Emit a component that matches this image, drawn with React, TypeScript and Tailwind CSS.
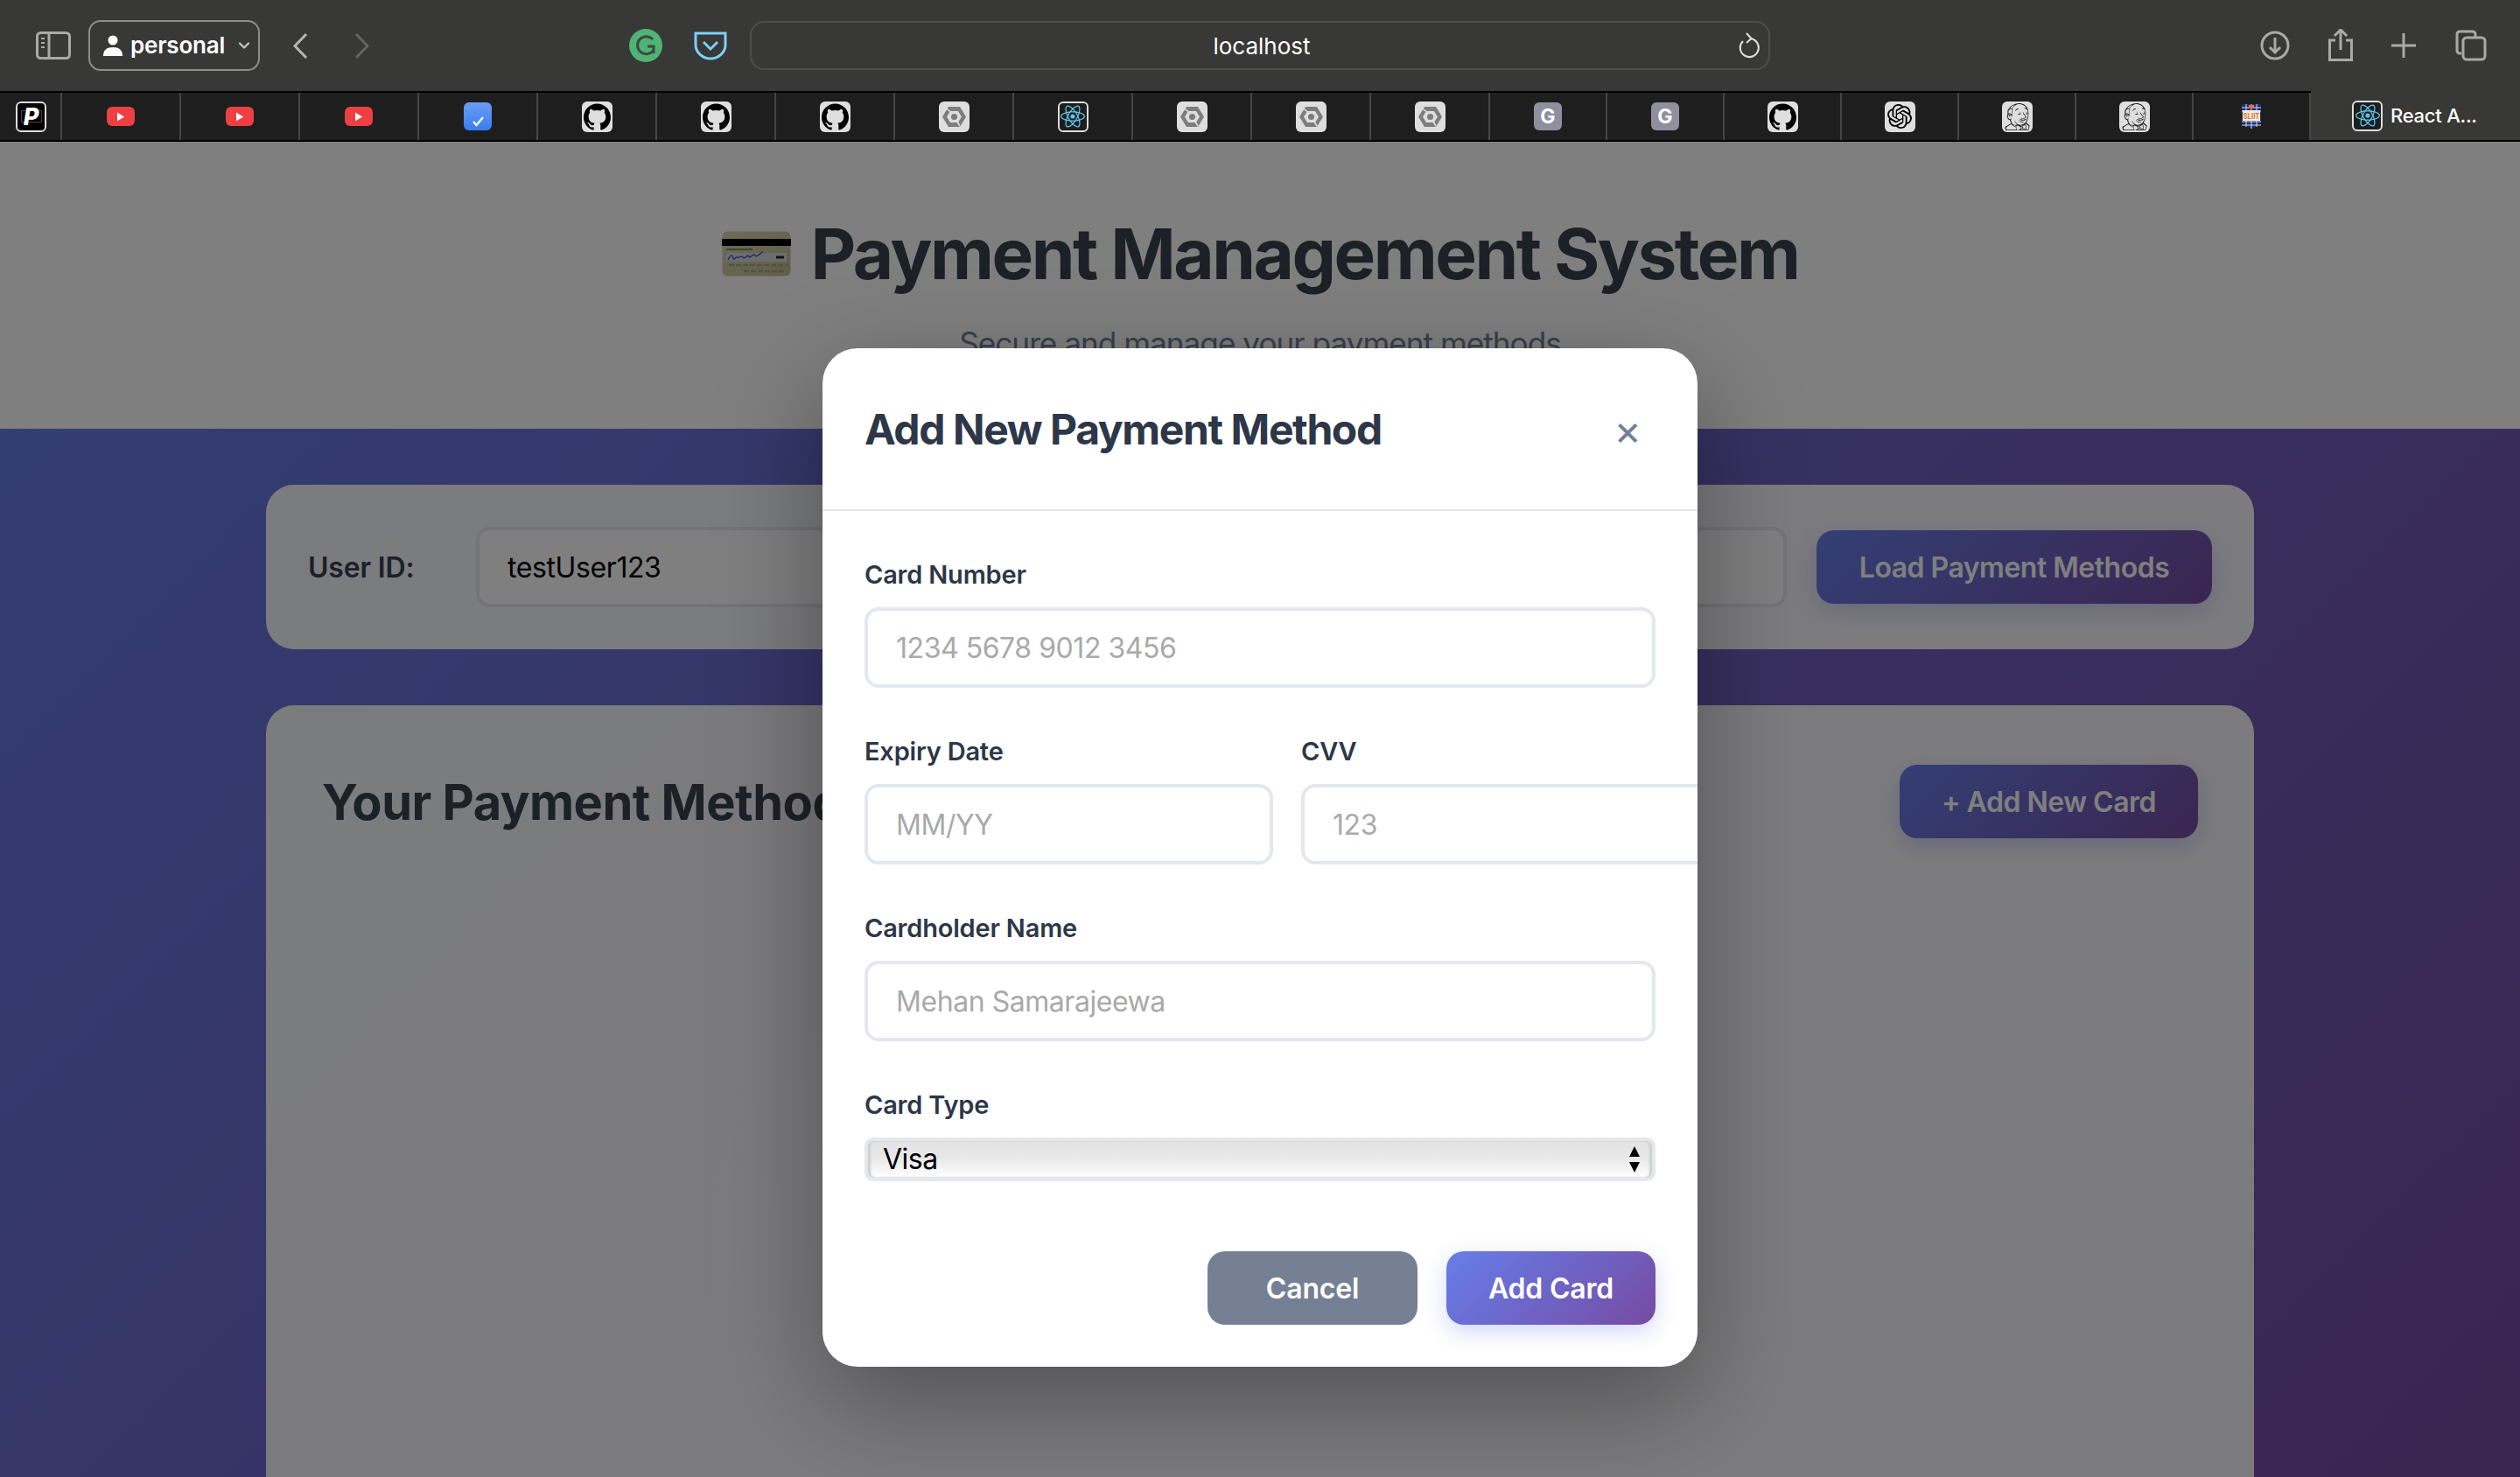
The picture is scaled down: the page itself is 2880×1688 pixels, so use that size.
import { SiGithub, SiJenkins, SiOpenai, SiReact } from "react-icons/si";
import { ChevronDown } from "lucide-react";

const tabEnds = [207, 343, 479, 615, 751, 887, 1023, 1159, 1295, 1431, 1567, 1703, 1837, 1971, 2105, 2239, 2373, 2507, 2641];

type TabKind = "yt" | "check" | "gh" | "hex" | "react" | "g" | "ai" | "jenkins" | "sliit";
const tabKinds: TabKind[] = ["yt", "yt", "yt", "check", "gh", "gh", "gh", "hex", "react", "hex", "hex", "hex", "g", "g", "gh", "ai", "jenkins", "jenkins", "sliit"];

function Tile({ children, dark }: { children: React.ReactNode; dark?: boolean }) {
  return (
    <div className={`flex h-[35px] w-[35px] items-center justify-center overflow-hidden rounded-[6px] ${dark ? "border-2 border-[#dcdcdc] bg-[#1d1d1d]" : "bg-[#dedede]"}`}>
      {children}
    </div>
  );
}

function HexIcon() {
  return (
    <svg width="29" height="27" viewBox="0 0 29 27" fill="none">
      <path d="M8 2h13l7 11.5-7 11.5H8L1 13.5z" fill="#7d7d7d" />
      <path d="M10 7h9l4 6.5-4 6.5h-9l-4-6.5z" fill="#dedede" />
      <circle cx="14.5" cy="13.5" r="3.6" fill="#7d7d7d" />
      <path d="M5 3.5l5 4M21 24l-3-5" stroke="#dedede" strokeWidth="1.6" />
    </svg>
  );
}

function TabIcon({ kind }: { kind: TabKind }) {
  if (kind === "yt") {
    return (
      <div className="flex h-[22px] w-[32px] items-center justify-center rounded-[6px] bg-[#ee3f42]">
        <svg width="10" height="11" viewBox="0 0 10 11"><path d="M1 0.5l8 5-8 5z" fill="#fff" /></svg>
      </div>
    );
  }
  if (kind === "check") {
    return (
      <div className="flex h-[32px] w-[32px] items-end justify-center rounded-[6px] bg-[linear-gradient(180deg,#6c9cf2,#387ff0)] pb-[4px]">
        <svg width="15" height="13" viewBox="0 0 15 13" fill="none"><path d="M2 7l3.5 4L13 2" stroke="#fff" strokeWidth="2.2" /></svg>
      </div>
    );
  }
  if (kind === "gh") return <Tile><SiGithub className="text-[31px] text-black" /></Tile>;
  if (kind === "hex") return <Tile><HexIcon /></Tile>;
  if (kind === "react") return <Tile dark><SiReact className="text-[28px] text-[#5fc4e8]" /></Tile>;
  if (kind === "g") {
    return <div className="flex h-[32px] w-[32px] items-center justify-center rounded-[6px] bg-[#8f8f9d] text-[23px] font-bold text-white">G</div>;
  }
  if (kind === "ai") return <Tile><SiOpenai className="text-[28px] text-black" /></Tile>;
  if (kind === "jenkins") return <Tile><SiJenkins className="text-[31px] text-[#222]" /></Tile>;
  return (
    <svg width="24" height="30" viewBox="0 0 24 30">
      <path d="M1 1h22v18c0 5-6 8-11 10C7 27 1 24 1 19z" fill="#1e2f7c" />
      <path d="M1 5h22M1 9h22M1 21h22M1 25h22M6 1v26M12 1v28M18 1v26" stroke="#d8d8e6" strokeWidth="1" />
      <rect x="2" y="8" width="20" height="12" fill="#f0ece4" />
      <text x="12" y="18" textAnchor="middle" fontSize="9" fontWeight="700" fill="#e2762b" textLength="19" lengthAdjust="spacingAndGlyphs">SLIIT</text>
      <rect x="9" y="2" width="6" height="4" fill="#e2762b" />
    </svg>
  );
}

function TabBar() {
  return (
    <div className="flex h-[58px] border-y-2 border-black bg-[#1e1e1e]">
      <div className="flex w-[71px] items-center justify-start border-r-2 border-[#454545] pl-[18px]">
        <div className="relative flex h-[35px] w-[35px] items-center justify-center rounded-[6px] border-2 border-[#dcdcdc] bg-black">
          <div className="absolute h-[14px] w-[24px] border border-[#444]" />
          <span className="relative text-[27px] font-extrabold italic leading-none text-white">P</span>
        </div>
      </div>
      {tabKinds.map((kind, i) => (
        <div key={i} className="flex items-center justify-center border-r-2 border-[#454545]" style={{ width: tabEnds[i] - (i === 0 ? 71 : tabEnds[i - 1]) }}>
          <TabIcon kind={kind} />
        </div>
      ))}
      <div className="-mt-[2px] flex flex-1 items-center bg-[#383836] pl-[47px]">
        <Tile dark><SiReact className="text-[28px] text-[#5fc4e8]" /></Tile>
        <span className="ml-[9px] text-[22px] font-medium tracking-[-0.25px] text-white">React A...</span>
      </div>
    </div>
  );
}

function Toolbar() {
  return (
    <div className="flex h-[104px] items-center bg-[#383836]">
      <svg className="ml-[41px]" width="40" height="32" viewBox="0 0 40 32" fill="none" stroke="#a9a9a7" strokeWidth="3">
        <rect x="1.5" y="1.5" width="37" height="29" rx="4" />
        <path d="M15 1.5v29" />
        <path d="M6 8h4M6 13h4M6 18h4" strokeWidth="2" />
      </svg>
      <div className="ml-[20px] flex h-[58px] w-[196px] items-center rounded-[14px] border-2 border-[#8c8c8a] pl-[15px]">
        <svg width="22" height="24" viewBox="0 0 22 24" fill="#fff">
          <circle cx="11" cy="6" r="5.5" />
          <path d="M0 24c0-7 4-10 11-10s11 3 11 10z" />
        </svg>
        <span className="ml-[9px] text-[26px] font-semibold leading-none tracking-[-0.2px] text-white">personal</span>
        <ChevronDown className="ml-[12px] text-[#c9c9c7]" size={20} strokeWidth={2.6} />
      </div>
      <svg className="ml-[36px]" width="20" height="31" viewBox="0 0 20 31" fill="none" stroke="#b5b5b3" strokeWidth="3"><path d="M17 2L4 15.5 17 29" /></svg>
      <svg className="ml-[51px]" width="20" height="31" viewBox="0 0 20 31" fill="none" stroke="#636361" strokeWidth="3"><path d="M3 2l13 13.5L3 29" /></svg>
      <div className="ml-[295px] flex h-[38px] w-[38px] items-center justify-center rounded-full bg-[#4fb374]">
        <svg width="26" height="26" viewBox="0 0 26 26" fill="none" stroke="#3c4a42" strokeWidth="3"><path d="M21 6a10 10 0 1 0 1 12M15 14h7v8" /></svg>
      </div>
      <svg className="ml-[36px]" width="38" height="33" viewBox="0 0 38 33" fill="none" stroke="#7cd0fb" strokeWidth="3">
        <path d="M2 2h34v13c0 9-8 16-17 16S2 24 2 15z" />
        <path d="M11 12l8 8 8-8" />
      </svg>
      <div className="ml-[26px] flex h-[56px] w-[1166px] items-center justify-center rounded-[16px] border-2 border-[#4e4e4c] pl-[4px]">
        <span className="text-[26px] text-white">localhost</span>
      </div>
      <svg className="-ml-[36px]" width="24" height="32" viewBox="0 0 24 32" fill="none" stroke="#d8d8d6" strokeWidth="2.2">
        <path d="M14 8.2A10.5 10.5 0 1 1 5 11" />
        <path d="M9 2l5.5 6L9 13" />
      </svg>
      <svg className="ml-[572px]" width="34" height="34" viewBox="0 0 34 34" fill="none" stroke="#a9a9a7" strokeWidth="3">
        <circle cx="17" cy="17" r="15" />
        <path d="M17 8v17M11 19l6 6 6-6" />
      </svg>
      <svg className="ml-[43px]" width="30" height="38" viewBox="0 0 30 38" fill="none" stroke="#a9a9a7" strokeWidth="3">
        <path d="M9 13H2.5v22.5h25V13H21" />
        <path d="M15 24V2M8 8l7-7 7 7" />
      </svg>
      <svg className="ml-[42px]" width="30" height="30" viewBox="0 0 30 30" fill="none" stroke="#a9a9a7" strokeWidth="3"><path d="M15 1v28M1 15h28" /></svg>
      <svg className="ml-[44px]" width="36" height="36" viewBox="0 0 36 36" fill="none" stroke="#a9a9a7" strokeWidth="3">
        <path d="M7 27H5a3 3 0 0 1-3-3V5a3 3 0 0 1 3-3h15a3 3 0 0 1 3 3v3" />
        <rect x="9" y="9" width="25" height="25" rx="4" />
      </svg>
    </div>
  );
}

function CardEmoji() {
  return (
    <svg width="79" height="52" viewBox="0 0 79 52">
      <defs>
        <linearGradient id="gold" x1="0" y1="0" x2="1" y2="1">
          <stop offset="0" stopColor="#dcd6ae" />
          <stop offset="1" stopColor="#c0ba90" />
        </linearGradient>
      </defs>
      <rect x="0.5" y="0.5" width="78" height="51" rx="6" fill="url(#gold)" />
      <rect x="0" y="9" width="79" height="8" fill="#000" />
      <rect x="5" y="25" width="69" height="10" fill="#d8dae6" />
      <path d="M7 33c3-7 5-6 6-2s3-3 5-1 3-3 6 0 5-4 7-1 4-4 7-1 5-3 9-4" fill="none" stroke="#3f5fb0" strokeWidth="1.4" />
      <path d="M62 30h9" stroke="#222" strokeWidth="3" />
      <path d="M5 21h30" stroke="#555" strokeWidth="1.2" />
      <path d="M8 39h68M25 46h48" stroke="#a8a27a" strokeWidth="2.6" strokeDasharray="6 2" />
    </svg>
  );
}

function Field({ label, placeholder, width }: { label: string; placeholder: string; width?: string }) {
  return (
    <div className={`${width ?? "w-full"} shrink-0`}>
      <label className="mb-[14px] block pt-[2px] text-[29px] font-semibold leading-[46px] tracking-[-0.2px] text-[#2d3748]">{label}</label>
      <input
        placeholder={placeholder}
        className="h-[92px] w-full rounded-[16px] border-4 border-[#e2e8f0] bg-white px-8 text-[32px] tracking-[-0.45px] outline-none placeholder:text-[#a9a9a9]"
      />
    </div>
  );
}

export default function App() {
  return (
    <div className="flex h-[1688px] flex-col overflow-hidden bg-white [font-family:Inter,sans-serif]">
      <Toolbar />
      <TabBar />
      <div className="relative flex-1 overflow-hidden bg-[linear-gradient(135deg,#667eea,#764ba2)]">
        <header className="flex h-[328px] flex-col items-center bg-[#fefefe] pt-[80px]">
          <div className="flex items-center gap-[23px]">
            <CardEmoji />
            <h1 className="text-[80px] font-bold leading-[96px] tracking-[-2.5px] text-[#38424f]">Payment Management System</h1>
          </div>
          <p className="mt-[32px] text-[35.2px] leading-[44px] tracking-[-1px] text-[#718096]">Secure and manage your payment methods</p>
        </header>

        <main className="flex h-full flex-col gap-16 px-[304px] pt-16">
          <section className="flex items-center rounded-[32px] bg-white/95 p-12">
            <label className="w-[192px] shrink-0 pt-[1px] text-[32px] font-semibold tracking-[-0.2px] text-[#38424f]">User ID:</label>
            <input
              defaultValue="testUser123"
              className="h-[92px] flex-1 rounded-[16px] border-4 border-[#e2e8f0] bg-white px-8 text-[32px] tracking-[-0.4px] text-black outline-none"
            />
            <button className="ml-[34px] h-[84px] w-[452px] rounded-[20px] bg-[linear-gradient(135deg,#667eea,#764ba2)] pt-[1px] text-[32px] font-semibold tracking-[-0.5px] text-white shadow-[0_8px_24px_rgba(102,126,234,0.3)]">
              Load Payment Methods
            </button>
          </section>

          <section className="h-[1200px] rounded-[32px] bg-white/95 p-16">
            <div className="flex h-[92px] items-center justify-between">
              <h2 className="pt-[2px] text-[56px] font-bold tracking-[-0.5px] text-[#38424f]">Your Payment Methods</h2>
              <button className="h-[84px] w-[341px] rounded-[20px] bg-[linear-gradient(135deg,#667eea,#764ba2)] pt-[2px] text-[32px] font-semibold tracking-[-0.5px] text-white shadow-[0_8px_24px_rgba(102,126,234,0.3)]">
                + Add New Card
              </button>
            </div>
          </section>
        </main>

        <div className="absolute inset-0 flex justify-center bg-black/50 pt-[236px]">
          <div className="h-[1164px] w-[1000px] overflow-hidden rounded-[40px] bg-white shadow-[0_40px_120px_rgba(0,0,0,0.35)]">
            <div className="flex h-[186px] items-center justify-between border-b-2 border-[#e2e8f0] px-12">
              <h3 className="pt-[2px] text-[48px] font-bold tracking-[-1.4px] text-[#2d3748]">Add New Payment Method</h3>
              <span className="mr-[16px] mt-[4px] text-[48px] leading-none text-[#718096]">×</span>
            </div>
            <form className="flex flex-col gap-12 p-12">
              <Field label="Card Number" placeholder="1234 5678 9012 3456" />
              <div className="flex gap-[32px]">
                <Field label="Expiry Date" placeholder="MM/YY" width="w-[467px]" />
                <Field label="CVV" placeholder="123" width="w-[467px]" />
              </div>
              <Field label="Cardholder Name" placeholder="Mehan Samarajeewa" />
              <div>
                <label className="mb-[14px] block pt-[2px] text-[29px] font-semibold leading-[46px] tracking-[-0.2px] text-[#2d3748]">Card Type</label>
                <div className="relative">
                  <select className="h-[50px] w-full appearance-none rounded-[10px] border-4 border-[#e2e8f0] bg-[linear-gradient(180deg,#e3e3e3_0%,#e8e8e8_45%,#ffffff_100%)] pl-[17px] text-[32px] leading-none tracking-[-0.5px] text-black shadow-[inset_3px_0_2px_#cfcfcf,inset_-3px_0_2px_#cfcfcf] outline-none">
                    <option>Visa</option>
                  </select>
                  <svg className="pointer-events-none absolute right-[17px] top-[9px]" width="14" height="32" viewBox="0 0 14 32" fill="#000">
                    <path d="M7 1l6 12H1zM7 31L1 19h12z" />
                  </svg>
                </div>
              </div>
              <div className="mt-8 flex justify-end gap-[33px]">
                <button type="button" className="h-[84px] w-[240px] rounded-[20px] bg-[#768094] pt-[1px] text-[32px] font-semibold tracking-[-0.2px] text-white">Cancel</button>
                <button type="button" className="h-[84px] w-[239px] rounded-[20px] bg-[linear-gradient(135deg,#667eea,#764ba2)] pt-[1px] text-[32px] font-semibold tracking-[-0.2px] text-white shadow-[0_8px_24px_rgba(102,126,234,0.3)]">Add Card</button>
              </div>
            </form>
          </div>
        </div>
      </div>
    </div>
  );
}
